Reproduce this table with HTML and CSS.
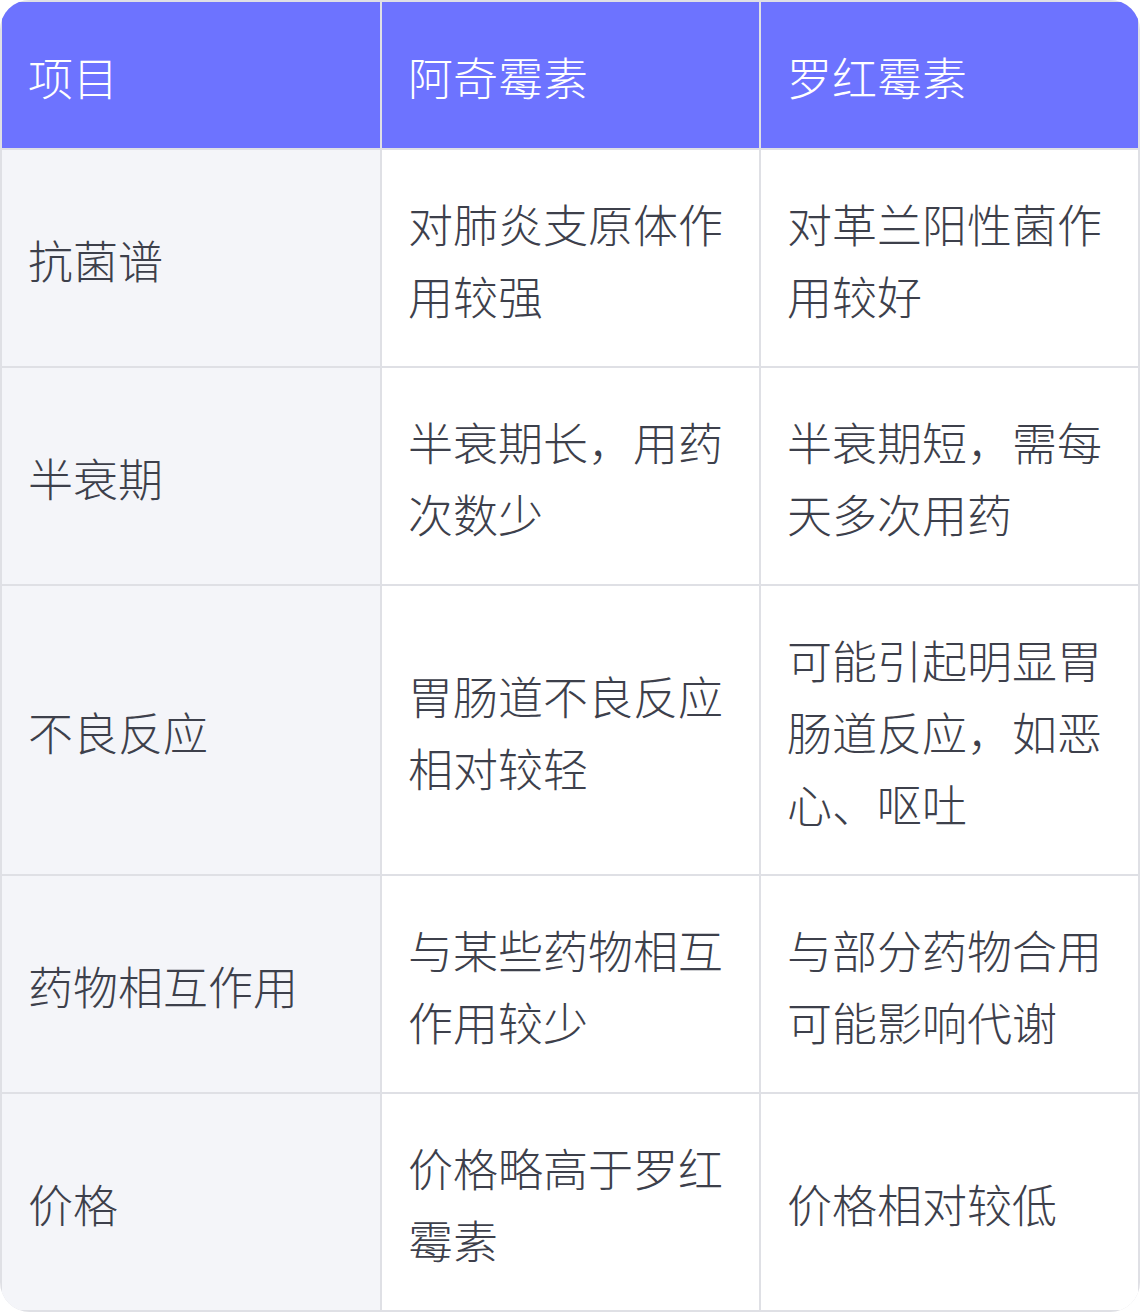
FILE: index.html
```html
<!DOCTYPE html>
<html lang="zh">
<head>
<meta charset="utf-8">
<link rel="stylesheet" href="styles.css">
</head>
<body>
<div class="table">
  <div class="cell head">项目</div>
  <div class="cell head">阿奇霉素</div>
  <div class="cell head">罗红霉素</div>

  <div class="cell key">抗菌谱</div>
  <div class="cell">对肺炎支原体作用较强</div>
  <div class="cell">对革兰阳性菌作用较好</div>

  <div class="cell key">半衰期</div>
  <div class="cell">半衰期长，用药次数少</div>
  <div class="cell">半衰期短，需每天多次用药</div>

  <div class="cell key">不良反应</div>
  <div class="cell">胃肠道不良反应相对较轻</div>
  <div class="cell">可能引起明显胃肠道反应，如恶心、呕吐</div>

  <div class="cell key">药物相互作用</div>
  <div class="cell">与某些药物相互作用较少</div>
  <div class="cell">与部分药物合用可能影响代谢</div>

  <div class="cell key">价格</div>
  <div class="cell">价格略高于罗红霉素</div>
  <div class="cell">价格相对较低</div>
</div>
</body>
</html>
```
FILE: styles.css
```css
html, body {
  margin: 0;
  padding: 0;
  background: #ffffff;
}
body {
  width: 1140px;
  font-family: "Noto Sans CJK SC", "Noto Sans", sans-serif;
}
.table {
  display: grid;
  grid-template-columns: 378px 377px 1fr;
  gap: 2px;
  padding: 2px;
  background: #dfe0e5;
  border-radius: 30px;
  overflow: hidden;
  width: 1140px;
  box-sizing: border-box;
}
.cell {
  background: #ffffff;
  color: #3d404b;
  font-size: 45px;
  font-weight: 300;
  line-height: 72px;
  padding: 38px 26px 34px;
  display: flex;
  align-items: center;
  word-break: break-all;
}
.head {
  background: #6d73ff;
  color: #ffffff;
  padding-top: 39px;
  padding-bottom: 35px;
}
.key {
  background: #f4f5f9;
}
```
